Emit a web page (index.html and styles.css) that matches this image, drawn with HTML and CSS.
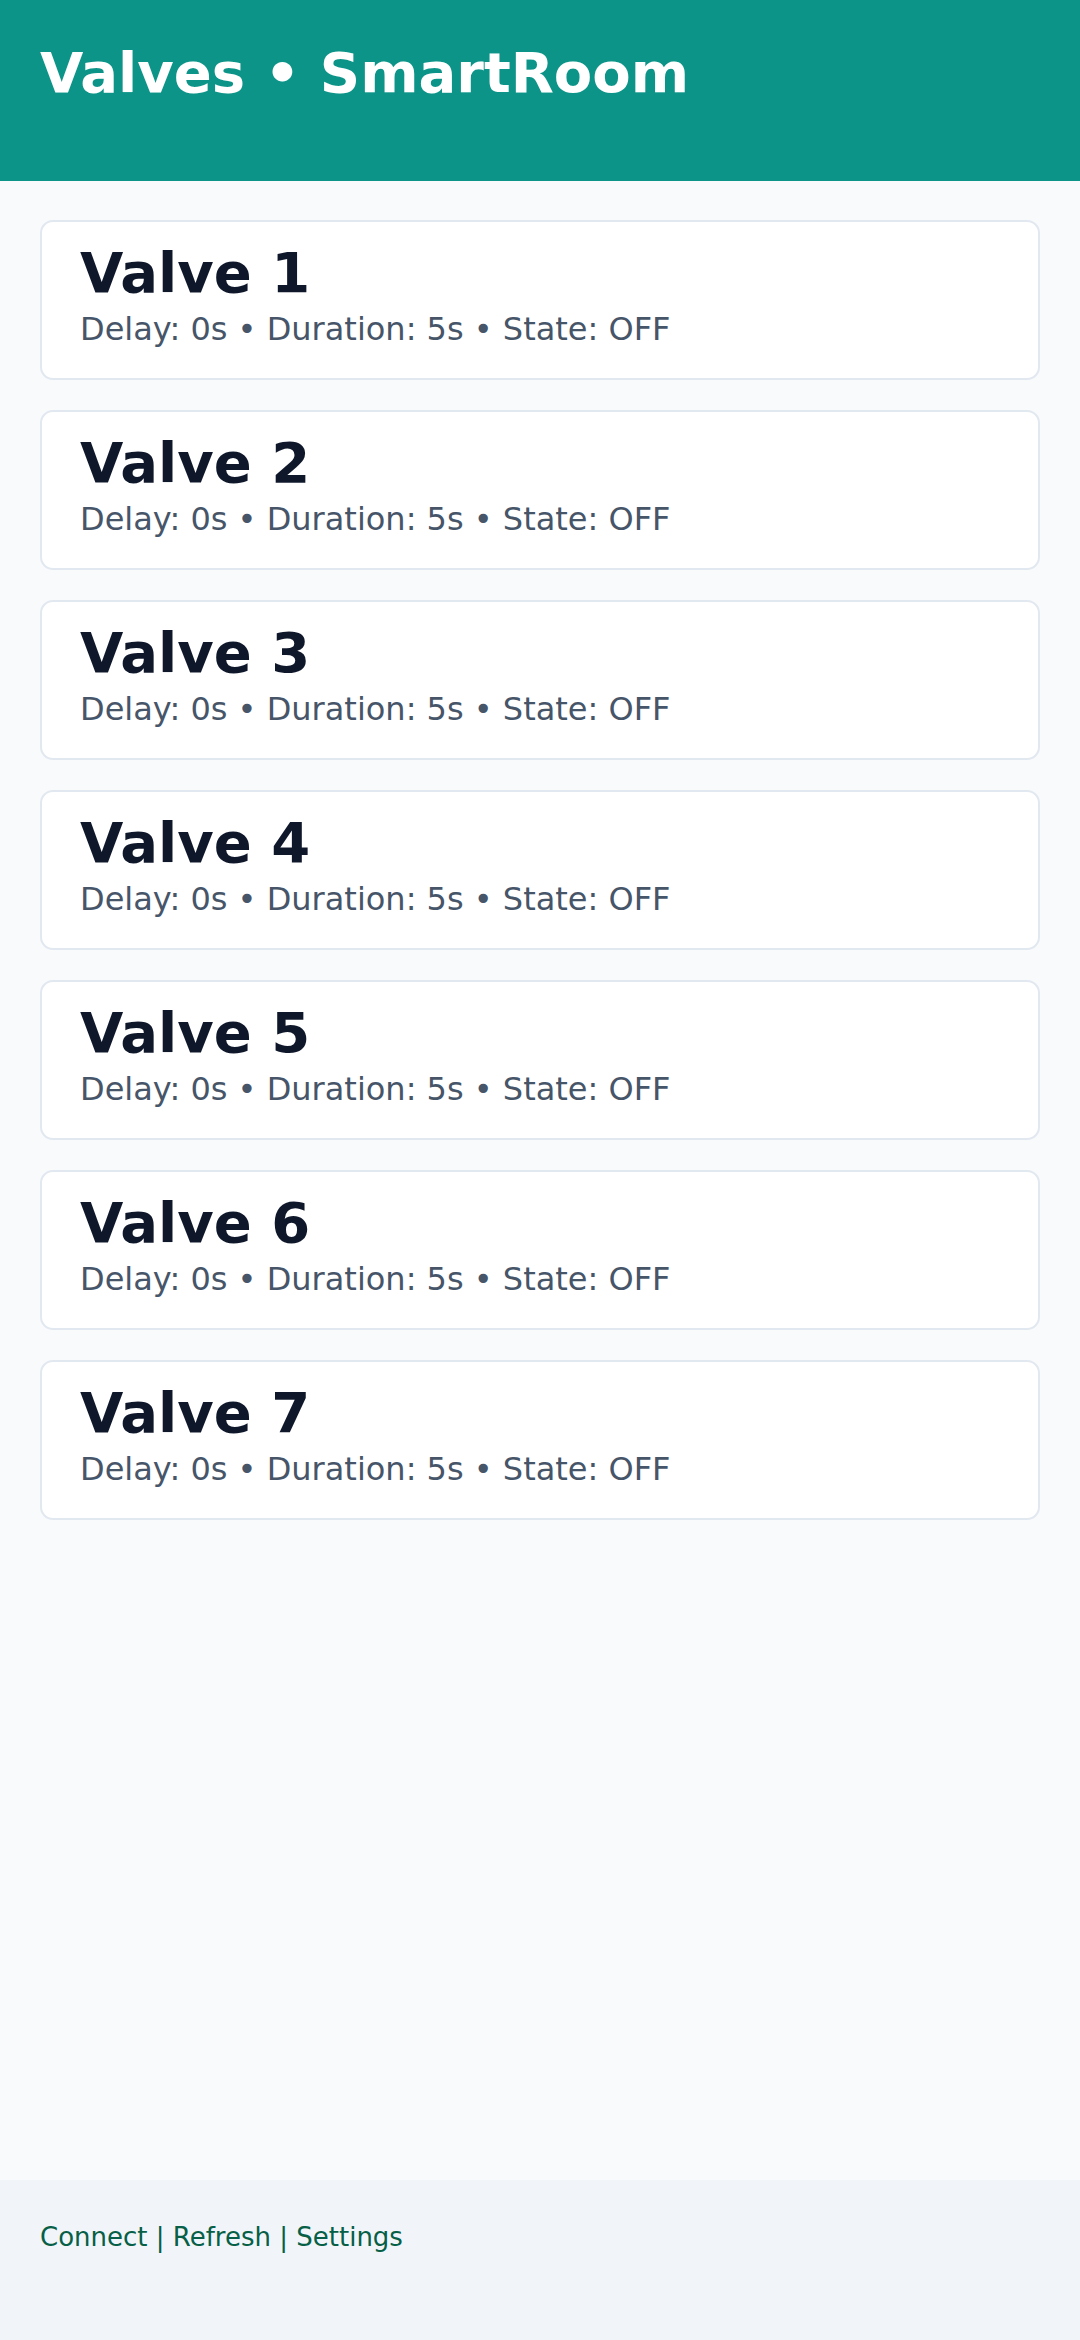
FILE: index.html
```html
<!DOCTYPE html>
<html lang="en">
<head>
<meta charset="utf-8">
<title>Valves • SmartRoom</title>
<link rel="stylesheet" href="styles.css">
</head>
<body>
<header class="app-header">
  <h1 class="app-title">Valves • SmartRoom</h1>
</header>
<main class="valve-list">
  <div class="valve-card"><div class="valve-name">Valve 1</div><div class="valve-meta">Delay: 0s • Duration: 5s • State: OFF</div></div>
  <div class="valve-card"><div class="valve-name">Valve 2</div><div class="valve-meta">Delay: 0s • Duration: 5s • State: OFF</div></div>
  <div class="valve-card"><div class="valve-name">Valve 3</div><div class="valve-meta">Delay: 0s • Duration: 5s • State: OFF</div></div>
  <div class="valve-card"><div class="valve-name">Valve 4</div><div class="valve-meta">Delay: 0s • Duration: 5s • State: OFF</div></div>
  <div class="valve-card"><div class="valve-name">Valve 5</div><div class="valve-meta">Delay: 0s • Duration: 5s • State: OFF</div></div>
  <div class="valve-card"><div class="valve-name">Valve 6</div><div class="valve-meta">Delay: 0s • Duration: 5s • State: OFF</div></div>
  <div class="valve-card"><div class="valve-name">Valve 7</div><div class="valve-meta">Delay: 0s • Duration: 5s • State: OFF</div></div>
</main>
<footer class="app-footer">
  <span class="footer-links">Connect | Refresh | Settings</span>
</footer>
</body>
</html>
```
FILE: styles.css
```css
* { box-sizing: border-box; }
html, body { margin: 0; padding: 0; }
body {
  font-family: "DejaVu Sans", sans-serif;
  background: #f8fafc;
  min-height: 2340px;
  display: flex;
  flex-direction: column;
}
.app-header {
  background: #0d9488;
  height: 181px;
  padding: 40px 40px 0;
  flex-shrink: 0;
}
.app-title {
  margin: 0;
  color: #ffffff;
  font-size: 56px;
  font-weight: 700;
  line-height: normal;
}
.valve-list {
  flex: 1;
  padding: 39px 40px;
  display: flex;
  flex-direction: column;
  gap: 30px;
}
.valve-card {
  background: #ffffff;
  border: 2px solid #e2e8f0;
  border-radius: 13px;
  padding: 18px 38px 30px;
  display: flex;
  flex-direction: column;
}
.valve-name {
  color: #0f172a;
  font-size: 56px;
  font-weight: 700;
  line-height: 66px;
  margin-bottom: 4px;
}
.valve-meta {
  color: #475569;
  font-size: 32px;
  line-height: 38px;
}
.app-footer {
  background: #f1f5f9;
  height: 160px;
  padding: 42px 40px 0;
  flex-shrink: 0;
}
.footer-links {
  color: #065f46;
  font-size: 26px;
  line-height: normal;
}
```
